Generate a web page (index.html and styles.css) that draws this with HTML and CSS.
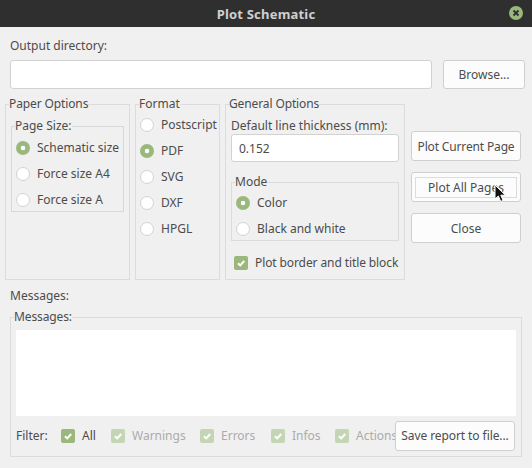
FILE: index.html
```html
<!DOCTYPE html>
<html lang="en">
<head>
  <meta charset="UTF-8">
  <title>Plot Schematic</title>
  <link rel="stylesheet" href="styles.css">
</head>
<body>

  <header class="titlebar">
    <span class="title">Plot Schematic</span>
    <span class="close-icon">
      <svg width="14" height="14" viewBox="0 0 14 14">
        <circle cx="7" cy="7" r="7" fill="#9ab87c"/>
        <path d="M4.5 4.5l5 5M9.5 4.5l-5 5" stroke="#2f2f2f" stroke-width="1.8" fill="none"/>
      </svg>
    </span>
  </header>

  <main class="dialog">

    <!-- OUTPUT DIRECTORY -->
    <label class="output-label">Output directory:</label>
    <div class="output-row">
      <input type="text" class="text-input output-input">
      <button class="btn browse-btn">Browse...</button>
    </div>

    <!-- OPTIONS -->
    <div class="options">
      <fieldset class="group paper">
        <legend>Paper Options</legend>
        <fieldset class="group page-size">
          <legend>Page Size:</legend>
          <div class="radio"><span class="dot on"></span>Schematic size</div>
          <div class="radio"><span class="dot"></span>Force size A4</div>
          <div class="radio"><span class="dot"></span>Force size A</div>
        </fieldset>
      </fieldset>

      <fieldset class="group format">
        <legend>Format</legend>
        <div class="radio"><span class="dot"></span>Postscript</div>
        <div class="radio"><span class="dot on"></span>PDF</div>
        <div class="radio"><span class="dot"></span>SVG</div>
        <div class="radio"><span class="dot"></span>DXF</div>
        <div class="radio"><span class="dot"></span>HPGL</div>
      </fieldset>

      <fieldset class="group general">
        <legend>General Options</legend>
        <label class="thickness-label">Default line thickness (mm):</label>
        <input type="text" class="text-input thickness-input" value="0.152">
        <fieldset class="group mode">
          <legend>Mode</legend>
          <div class="radio"><span class="dot on"></span>Color</div>
          <div class="radio"><span class="dot"></span>Black and white</div>
        </fieldset>
        <div class="check border-check">
          <span class="box"><svg width="14" height="14" viewBox="0 0 14 14"><path d="M4 7.2l2.2 2.2L10.2 5" stroke="#fff" stroke-width="2" fill="none"/></svg></span>
          Plot border and title block
        </div>
      </fieldset>

      <div class="actions">
        <button class="btn current-btn">Plot Current Page</button>
        <button class="btn focused"><span class="focus-ring">Plot All Pages</span></button>
        <button class="btn">Close</button>
      </div>
    </div>

    <!-- MESSAGES -->
    <div class="messages-label">Messages:</div>
    <fieldset class="group messages">
      <legend>Messages:</legend>
      <div class="message-list"></div>
      <div class="filter-row">
        <span class="filter-label">Filter:</span>
        <div class="check f-all">
          <span class="box"><svg width="14" height="14" viewBox="0 0 14 14"><path d="M4 7.2l2.2 2.2L10.2 5" stroke="#fff" stroke-width="2" fill="none"/></svg></span>
          All
        </div>
        <div class="check off f-warnings">
          <span class="box"><svg width="14" height="14" viewBox="0 0 14 14"><path d="M4 7.2l2.2 2.2L10.2 5" stroke="#fff" stroke-width="2" fill="none"/></svg></span>
          Warnings
        </div>
        <div class="check off f-errors">
          <span class="box"><svg width="14" height="14" viewBox="0 0 14 14"><path d="M4 7.2l2.2 2.2L10.2 5" stroke="#fff" stroke-width="2" fill="none"/></svg></span>
          Errors
        </div>
        <div class="check off f-infos">
          <span class="box"><svg width="14" height="14" viewBox="0 0 14 14"><path d="M4 7.2l2.2 2.2L10.2 5" stroke="#fff" stroke-width="2" fill="none"/></svg></span>
          Infos
        </div>
        <div class="check off f-actions">
          <span class="box"><svg width="14" height="14" viewBox="0 0 14 14"><path d="M4 7.2l2.2 2.2L10.2 5" stroke="#fff" stroke-width="2" fill="none"/></svg></span>
          Actions
        </div>
        <button class="btn save-btn">Save report to file...</button>
      </div>
    </fieldset>
  </main>

  <!-- mouse pointer on top of the Plot All Pages button -->
  <svg class="cursor" width="14" height="20" viewBox="0 0 14 20">
    <path d="M1 1v14l3.4-3 2.3 5.4 2.4-1-2.3-5.2h4.6z" fill="#111" stroke="#fff" stroke-width="1"/>
  </svg>

</body>
</html>
```

FILE: styles.css
```css
html, body {
  margin: 0;
  height: 468px;
  overflow: hidden;
}

body {
  position: relative;
  background: #f0f0f0;
  font-family: "Noto Sans", sans-serif;
  font-size: 12px;
  line-height: 16px;
  color: #4c4c4c;
}

/* Title bar */
.titlebar {
  height: 27px;
  background: #2f2f2f;
  display: flex;
  align-items: center;
  justify-content: center;
  position: relative;
}

.title {
  color: #cfcfcf;
  font-weight: bold;
  font-size: 13px;
  letter-spacing: 0.2px;
}

.close-icon {
  position: absolute;
  left: 509px;
  top: 6px;
  width: 14px;
  height: 14px;
}

/* Dialog */
.dialog {
  padding: 11px 0 0 5px;
}

.output-label {
  display: block;
  margin-left: 5px;
}

.output-row {
  display: flex;
  margin: 6px 0 7px 5px;
}

.text-input {
  box-sizing: border-box;
  background: #fff;
  border: 1px solid #d2d2d2;
  border-radius: 3px;
  font: inherit;
  color: inherit;
  padding: 0 7px;
  outline: none;
}

.output-input {
  width: 422px;
  height: 29px;
}

.btn {
  box-sizing: border-box;
  background: #fcfcfc;
  border: 1px solid #cfcfcf;
  border-radius: 3px;
  font: inherit;
  color: inherit;
  padding: 0;
  height: 30px;
}

.browse-btn {
  width: 82px;
  height: 29px;
  margin-left: 11px;
}

/* Group boxes */
.group {
  box-sizing: border-box;
  margin: 0;
  padding: 0;
  border: 1px solid #dcdcdc;
  min-width: 0;
}

.group legend {
  padding: 0;
  margin-left: 3px;
  height: 16px;
}

.paper legend,
.general legend,
.messages legend {
  margin-left: -2px;
  letter-spacing: -0.12px;
}

.paper .page-size legend,
.general .mode legend {
  margin-left: 3px;
  letter-spacing: 0;
}

.format legend {
  margin-left: -1px;
}

.options {
  display: flex;
  height: 184px;
}

.paper {
  width: 125px;
  padding: 6px 5px 0;
}

.page-size {
  height: 94px;
  padding-top: 1px;
  border-color: #d8d8d8;
}

.format {
  width: 85px;
  margin-left: 5px;
  padding: 0 0 0 4px;
}

.general {
  width: 180px;
  margin-left: 5px;
  padding: 6px 5px 0;
}

/* Radios */
.radio {
  display: flex;
  align-items: center;
  height: 26px;
  white-space: nowrap;
}

.page-size .radio {
  margin-left: 4px;
}

.mode .radio {
  margin-left: 4px;
}

.dot {
  box-sizing: border-box;
  width: 14px;
  height: 14px;
  margin-right: 7px;
  border-radius: 50%;
  background: #fff;
  border: 1px solid #d2d2d2;
  flex: none;
}

.dot.on {
  background: radial-gradient(circle, #fff 0 2px, #9ab87c 2.6px);
  border: 0;
}

/* General options */
.thickness-label {
  display: block;
}

.thickness-input {
  display: block;
  width: 168px;
  height: 28px;
}

.mode {
  margin-top: 12px;
  height: 67px;
}

/* Checkboxes */
.check {
  display: flex;
  align-items: center;
  white-space: nowrap;
}

.box {
  width: 14px;
  height: 14px;
  margin-right: 7px;
  border-radius: 2px;
  background: #9ab87c;
  flex: none;
  display: block;
}

.box svg {
  display: block;
}

.border-check {
  margin: 14px 0 0 3px;
  letter-spacing: -0.1px;
}

.check.off {
  color: #ababab;
}

.check.off .box {
  background: #c4d5b3;
}

/* Buttons on the right */
.actions {
  display: flex;
  flex-direction: column;
  gap: 11px;
  width: 110px;
  margin-left: 6px;
  padding-top: 35px;
}

.actions .btn {
  padding-top: 1px;
}

.current-btn {
  letter-spacing: -0.15px;
}

.actions .focused {
  padding: 4px 3px;
}

.focus-ring {
  display: block;
  height: 21px;
  line-height: 20px;
  box-sizing: border-box;
  border: 1px solid #dcdcdc;
}

/* Messages */
.messages-label {
  margin: 8px 0 5px 5px;
}

.messages {
  width: 512px;
  height: 148px;
  margin-left: 5px;
  padding: 5px 5px 0;
}

.message-list {
  background: #fff;
  height: 86px;
}

.filter-row {
  display: flex;
  align-items: center;
  height: 30px;
  margin-top: 5px;
}

.filter-label {
  width: 45px;
}

.f-all {
  width: 50px;
}

.f-warnings {
  width: 89px;
}

.f-errors {
  width: 71px;
}

.f-infos {
  width: 64px;
}

.f-actions {
  width: 60px;
}

.save-btn {
  width: 120px;
  white-space: nowrap;
  letter-spacing: -0.08px;
}

.cursor {
  position: absolute;
  left: 494px;
  top: 184px;
}
```
